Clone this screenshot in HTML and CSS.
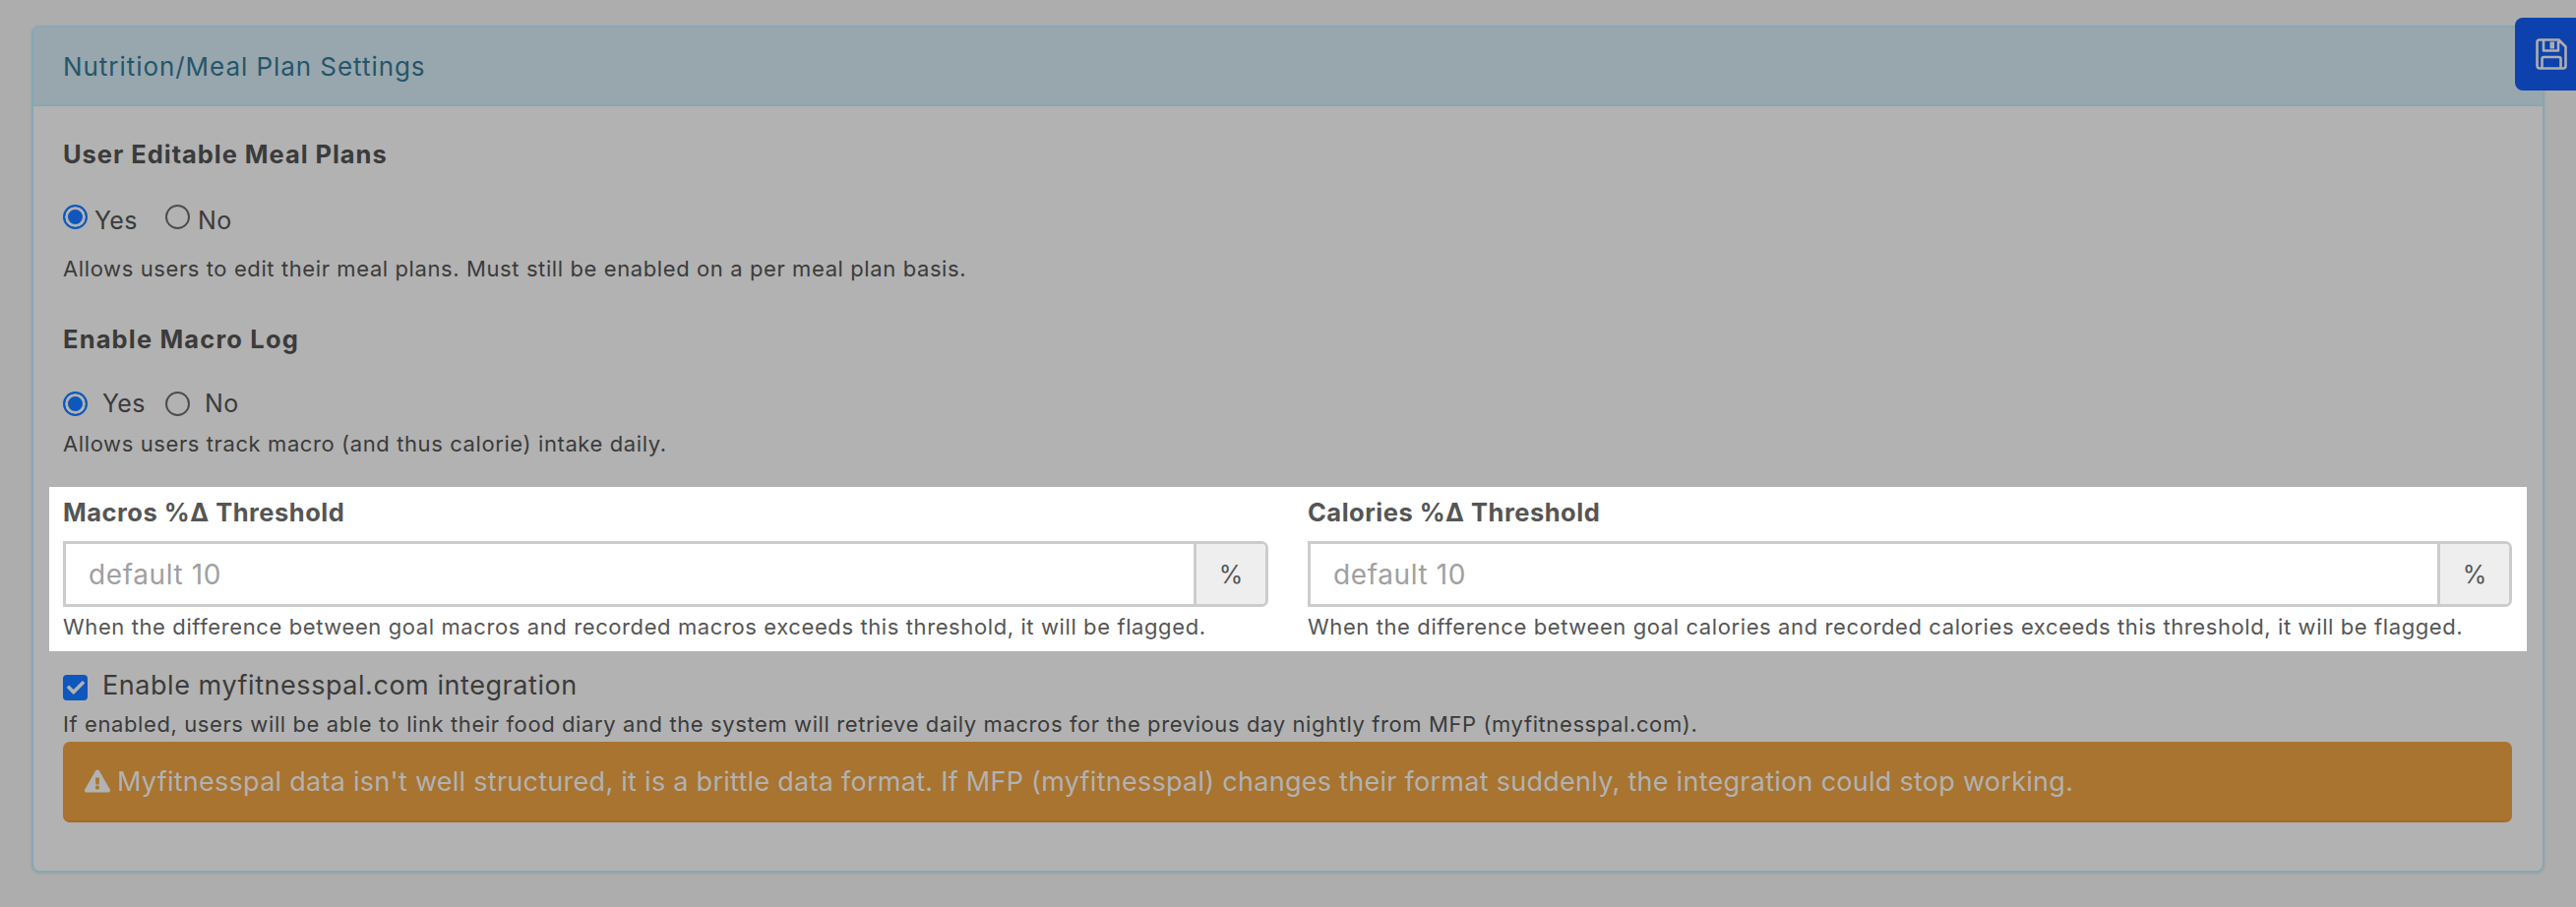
FILE: index.html
```html
<!DOCTYPE html>
<html lang="en">
<head>
<meta charset="utf-8">
<title>Nutrition/Meal Plan Settings</title>
<link rel="stylesheet" href="styles.css">
</head>
<body>
<button class="save" type="button" aria-label="Save">
  <svg class="save-icon" viewBox="0 0 32 32"><path d="M3.500 1.500h20l7 7v19.500a2.500 2.500 0 0 1-2.500 2.500H4A2.500 2.500 0 0 1 1.500 28V3.500a2 2 0 0 1 2-2zM8 2v10.500h15V3M6.500 30V21a2 2 0 0 1 2-2h15a2 2 0 0 1 2 2v9"/><rect class="save-slot" x="14.500" y="3.500" width="4.500" height="7"/></svg>
</button>
<section class="panel">
  <header class="panel-head">Nutrition/Meal Plan Settings</header>
  <div class="panel-body">
    <h3 class="title first">User Editable Meal Plans</h3>
    <div class="radios tight">
      <span class="radio on"></span><span class="radio-text">Yes</span>
      <span class="radio"></span><span class="radio-text">No</span>
    </div>
    <p class="help help-a">Allows users to edit their meal plans. Must still be enabled on a per meal plan basis.</p>
    <h3 class="title second">Enable Macro Log</h3>
    <div class="radios wide">
      <span class="radio on"></span><span class="radio-text">Yes</span>
      <span class="radio"></span><span class="radio-text">No</span>
    </div>
    <p class="help help-b">Allows users track macro (and thus calorie) intake daily.</p>
    <div class="spotlight">
      <div class="field">
        <h3 class="title">Macros %Δ Threshold</h3>
        <div class="input-group">
          <div class="input">default 10</div>
          <div class="addon">%</div>
        </div>
        <p class="help help-c">When the difference between goal macros and recorded macros exceeds this threshold, it will be flagged.</p>
      </div>
      <div class="field">
        <h3 class="title">Calories %Δ Threshold</h3>
        <div class="input-group">
          <div class="input">default 10</div>
          <div class="addon">%</div>
        </div>
        <p class="help help-c">When the difference between goal calories and recorded calories exceeds this threshold, it will be flagged.</p>
      </div>
    </div>
    <div class="check-row">
      <span class="check"><svg viewBox="0 0 512 512"><path d="M173.898 439.404l-166.400-166.400c-9.997-9.997-9.997-26.206 0-36.204l36.203-36.204c9.997-9.998 26.207-9.998 36.204 0L192 312.690 432.095 72.596c9.997-9.997 26.207-9.997 36.204 0l36.203 36.204c9.997 9.997 9.997 26.206 0 36.204l-294.400 294.401c-9.998 9.997-26.207 9.997-36.204-.001z"/></svg></span>
      <span class="check-text">Enable myfitnesspal.com integration</span>
    </div>
    <p class="help help-d">If enabled, users will be able to link their food diary and the system will retrieve daily macros for the previous day nightly from MFP (myfitnesspal.com).</p>
    <div class="alert">
      <svg class="alert-icon" viewBox="0 0 576 512"><path d="M569.517 440.013C587.975 472.007 564.806 512 527.940 512H48.054c-36.937 0-59.999-40.055-41.577-71.987L246.423 23.985c18.467-32.009 64.720-31.951 83.154 0l239.940 416.028zM288 354c-25.405 0-46 20.595-46 46s20.595 46 46 46 46-20.595 46-46-20.595-46-46-46zm-43.673-165.346l7.418 136c.347 6.364 5.609 11.346 11.982 11.346h48.546c6.373 0 11.635-4.982 11.982-11.346l7.418-136c.375-6.874-5.098-12.654-11.982-12.654h-63.383c-6.884 0-12.356 5.780-11.981 12.654z"/></svg>
      <span>Myfitnesspal data isn't well structured, it is a brittle data format. If MFP (myfitnesspal) changes their format suddenly, the integration could stop working.</span>
    </div>
  </div>
</section>
</body>
</html>
```
FILE: styles.css
```css
* { box-sizing: border-box; }
html, body { height: 100%; }
body {
  margin: 0;
  padding: 26px 32px 0;
  background: #adadad;
  font-family: Inter, "Liberation Sans", sans-serif;
  color: #3b3b3b;
  overflow: hidden;
}
.save {
  position: absolute;
  top: 18px;
  right: 0;
  width: 62px;
  height: 74px;
  padding: 0 0 0 21px;
  border: 0;
  border-radius: 8px 0 0 8px;
  background: #0d41ae;
  display: flex;
  align-items: center;
}
.save-icon { width: 32px; height: 32px; fill: none; stroke: #adadad; stroke-width: 2.600; stroke-linejoin: round; }
.save-slot { fill: #adadad; stroke: none; }
.panel {
  height: 861px;
  background: #b2b2b2;
  border: 2px solid #86a8b3;
  border-radius: 8px;
  box-shadow: 0 1px 3px rgba(0,0,0,.08);
}
.panel-head {
  height: 80px;
  padding-left: 30px;
  display: flex;
  align-items: center;
  background: #98a7ad;
  border-bottom: 2px solid #86a8b3;
  border-radius: 6px 6px 0 0;
  font-size: 26px;
  letter-spacing: .95px;
  color: #24566b;
}
.panel-body { padding: 0 31px 0 30px; }
.title {
  margin: 0;
  font-size: 25.500px;
  letter-spacing: .95px;
  line-height: 30px;
  font-weight: 700;
}
.first { margin-top: 34px; }
.second { margin-top: 42px; letter-spacing: 1.150px; }
.radios { display: flex; font-size: 25px; letter-spacing: .3px; }
.radio {
  width: 25px;
  height: 25px;
  flex: none;
  border: 2px solid #4d4d4d;
  border-radius: 50%;
}
.radio.on {
  border-color: #0d57bd;
  background: #0d57bd;
  box-shadow: inset 0 0 0 3px #b2b2b2;
}
.tight { margin-top: 36px; height: 31px; }
.tight .radio-text { margin: 1px 28px 0 7px; line-height: 30px; width: 44px; }
.tight .radio-text:last-child { margin-left: 8px; }
.wide { margin-top: 38px; height: 25px; }
.wide .radio-text { margin: 0 21px 0 15px; line-height: 24px; width: 43px; }
.help {
  margin: 0;
  font-size: 22px;
  letter-spacing: .6px;
  line-height: 30px;
}
.help-a { margin-top: 19px; }
.help-b { margin-top: 13px; }
.spotlight {
  margin: 29px -15px 0 -14px;
  padding: 11px 15px 10px 14px;
  background: #fff;
  color: #555;
  display: grid;
  grid-template-columns: 1225px 1224px;
  column-gap: 40px;
}
.spotlight .title { letter-spacing: .5px; }
.input-group { display: flex; height: 67px; margin-top: 14px; border: 3px solid #ccc; border-radius: 0 7px 7px 0; }
.input {
  flex: 1;
  padding-left: 23px;
  font-size: 28px;
  letter-spacing: .6px;
  line-height: 63px;
  color: #a0a0a0;
}
.addon {
  width: 73px;
  border-left: 3px solid #ccc;
  border-radius: 0 4px 4px 0;
  background: #eee;
  font-size: 25px;
  line-height: 62px;
  text-align: center;
}
.help-c { margin-top: 5px; }
.check-row { display: flex; height: 26px; margin-top: 24px; }
.check {
  width: 25px;
  height: 26px;
  flex: none;
  padding: 4px 3.500px;
  border-radius: 4px;
  background: #0d57bd;
}
.check svg { display: block; width: 18px; height: 18px; fill: #b2b2b2; }
.check-text { margin: -2px 0 0 15px; font-size: 27px; letter-spacing: .55px; line-height: 26px; }
.help-d { margin-top: 9px; }
.alert {
  height: 82px;
  margin-top: 3px;
  padding-left: 22px;
  display: flex;
  align-items: center;
  gap: 7px;
  background: #a8742f;
  border-bottom: 2px solid #a56a25;
  border-radius: 7px;
  color: #b2b2b2;
  font-size: 27px;
  letter-spacing: .27px;
}
.alert-icon { width: 26px; height: 24px; fill: #b2b2b2; flex: none; }
```
